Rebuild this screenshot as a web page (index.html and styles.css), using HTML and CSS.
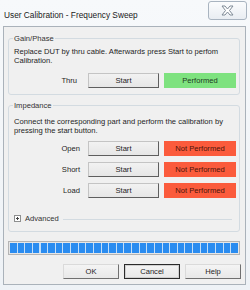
FILE: index.html
```html
<!DOCTYPE html>
<html lang="en">
<head>
    <meta charset="UTF-8">
    <meta name="viewport" content="width=device-width, initial-scale=1.0">
    <title>User Calibration - Frequency Sweep</title>
    <link rel="stylesheet" href="styles.css">
</head>
<body>
    <div class="window">
        <div class="titlebar">
            <span class="title">User Calibration - Frequency Sweep</span>
            <button class="close-btn" title="Close">
                <svg width="13" height="11" viewBox="0 0 13 11">
                    <path d="M1 1H4L6.5 4L9 1H12L8.5 5.5L12 10H9L6.5 7L4 10H1L4.5 5.5Z" fill="#fff" stroke="#7f8a96" stroke-width="1" stroke-linejoin="round"/>
                </svg>
            </button>
        </div>

        <div class="client">
            <fieldset class="group group-gain">
                <legend>Gain/Phase</legend>
                <p class="desc">Replace DUT by thru cable. Afterwards press Start to perfom Calibration.</p>
                <div class="cal-rows">
                    <div class="cal-row">
                        <span class="cal-label thru">Thru</span>
                        <button class="btn">Start</button>
                        <span class="status ok">Performed</span>
                    </div>
                </div>
            </fieldset>

            <fieldset class="group group-impedance">
                <legend>Impedance</legend>
                <p class="desc">Connect the corresponding part and perform the calibration by pressing the start button.</p>
                <div class="cal-rows">
                    <div class="cal-row">
                        <span class="cal-label">Open</span>
                        <button class="btn">Start</button>
                        <span class="status bad">Not Performed</span>
                    </div>
                    <div class="cal-row">
                        <span class="cal-label">Short</span>
                        <button class="btn">Start</button>
                        <span class="status bad">Not Performed</span>
                    </div>
                    <div class="cal-row">
                        <span class="cal-label">Load</span>
                        <button class="btn">Start</button>
                        <span class="status bad">Not Performed</span>
                    </div>
                </div>

                <div class="advanced">
                    <svg class="expander" width="7" height="7" viewBox="0 0 7 7">
                        <rect x="0.5" y="0.5" width="6" height="6" fill="#fff" stroke="#8e8f8f"/>
                        <path d="M2 3.5H5M3.5 2V5" stroke="#444" stroke-width="1"/>
                    </svg>
                    <span>Advanced</span>
                    <span class="adv-line"></span>
                </div>
            </fieldset>

            <div class="progress"><div class="progress-fill"></div></div>

            <div class="dialog-buttons">
                <button class="btn dlg">OK</button>
                <button class="btn dlg default">Cancel</button>
                <button class="btn dlg">Help</button>
            </div>
        </div>
    </div>
</body>
</html>
```

FILE: styles.css
```css
* {
    margin: 0;
    padding: 0;
    box-sizing: border-box;
}

body {
    width: 250px;
    height: 290px;
    overflow: hidden;
    font-family: "Liberation Sans", Arial, sans-serif;
    font-size: 7.6px;
    color: #1e1e1e;
    background-color: #f5f7fa;
}

.window {
    height: 290px;
    display: flex;
    flex-direction: column;
    padding: 0 4px 5px 3px;
    background: linear-gradient(to bottom, #f7f9fb, #eef2f6);
}

/* 标题栏 */
.titlebar {
    height: 26px;
    display: flex;
    justify-content: space-between;
    align-items: flex-start;
}

.title {
    margin: 10px 0 0 1px;
    font-size: 8.3px;
    line-height: 10px;
    color: #1a1a1a;
}

.close-btn {
    margin: 1px -1px 0 0;
    width: 39px;
    height: 19px;
    display: flex;
    justify-content: center;
    align-items: center;
    border: 1px solid #a9b4c0;
    border-radius: 3px;
    background: linear-gradient(to bottom, #fbfcfd, #e9edf2);
}

/* 客户区 */
.client {
    flex: 1;
    display: flex;
    flex-direction: column;
    padding: 0 5px 0 4px;
    background-color: #f0f0f0;
    border: 1px solid #aab2ba;
}

.group {
    border: 1px solid #d3dbe1;
    border-radius: 3px;
    padding: 0 3px 6px 5px;
    min-width: 0;
}

.group legend {
    padding: 0 1px;
    margin-left: -1px;
    line-height: 9px;
    color: #333;
}

.group-gain {
    margin-top: 7px;
}

.group-impedance {
    margin-top: 6px;
    padding-bottom: 8px;
}

.desc {
    line-height: 9px;
    margin-top: 4px;
}

.group-impedance .desc {
    margin-top: 7px;
}

.cal-rows {
    display: flex;
    flex-direction: column;
    gap: 6px;
    margin-top: 8px;
}

.group-impedance .cal-rows {
    margin-top: 6px;
}

.cal-row {
    display: flex;
    align-items: center;
    height: 15px;
}

.cal-label {
    flex: 1;
    text-align: right;
}

.cal-label.thru {
    padding-right: 3px;
}

.cal-row .btn {
    width: 71px;
    margin-left: 8px;
}

.btn {
    height: 15px;
    font-family: inherit;
    font-size: 7.6px;
    color: #1e1e1e;
    background: linear-gradient(to bottom, #f2f2f2, #e6e6e6);
    border: 1px solid #c4c4c4;
    border-right-color: #5e5e5e;
    border-bottom-color: #5e5e5e;
}

.status {
    width: 72px;
    height: 15px;
    margin-left: 5px;
    display: flex;
    justify-content: center;
    align-items: center;
}

.status.ok {
    background-color: #7ee27f;
    color: #1f3a1f;
}

.status.bad {
    background-color: #fb5b3c;
    color: #4a140a;
}

/* 高级选项 */
.advanced {
    display: flex;
    align-items: center;
    margin-top: 16px;
    line-height: 9px;
    color: #333;
}

.expander {
    margin-right: 4px;
}

.adv-line {
    flex: 1;
    height: 1px;
    margin: 1px 4px 0 4px;
    background-color: #d3dbe1;
}

/* 进度条 */
.progress {
    margin-top: 9px;
    height: 14px;
    border: 1px solid #b4b4b4;
    background-color: #e6e6e6;
    padding: 1px;
}

.progress-fill {
    height: 100%;
    background: repeating-linear-gradient(to right, #2a8cf0 0, #2a8cf0 6.6px, #c3def8 6.6px, #c3def8 7.63px);
}

/* 对话框按钮 */
.dialog-buttons {
    display: flex;
    justify-content: flex-end;
    gap: 5px;
    margin: 9px -1px 0 0;
}

.btn.dlg {
    width: 56px;
    background: linear-gradient(to bottom, #f4f4f4, #e8e8e8);
    border-color: #dadada #707070 #707070 #dadada;
}

.btn.dlg.default {
    border: 1px solid #2b2b2b;
    box-shadow: inset 0 0 0 1px #d0d0d0;
}
```
